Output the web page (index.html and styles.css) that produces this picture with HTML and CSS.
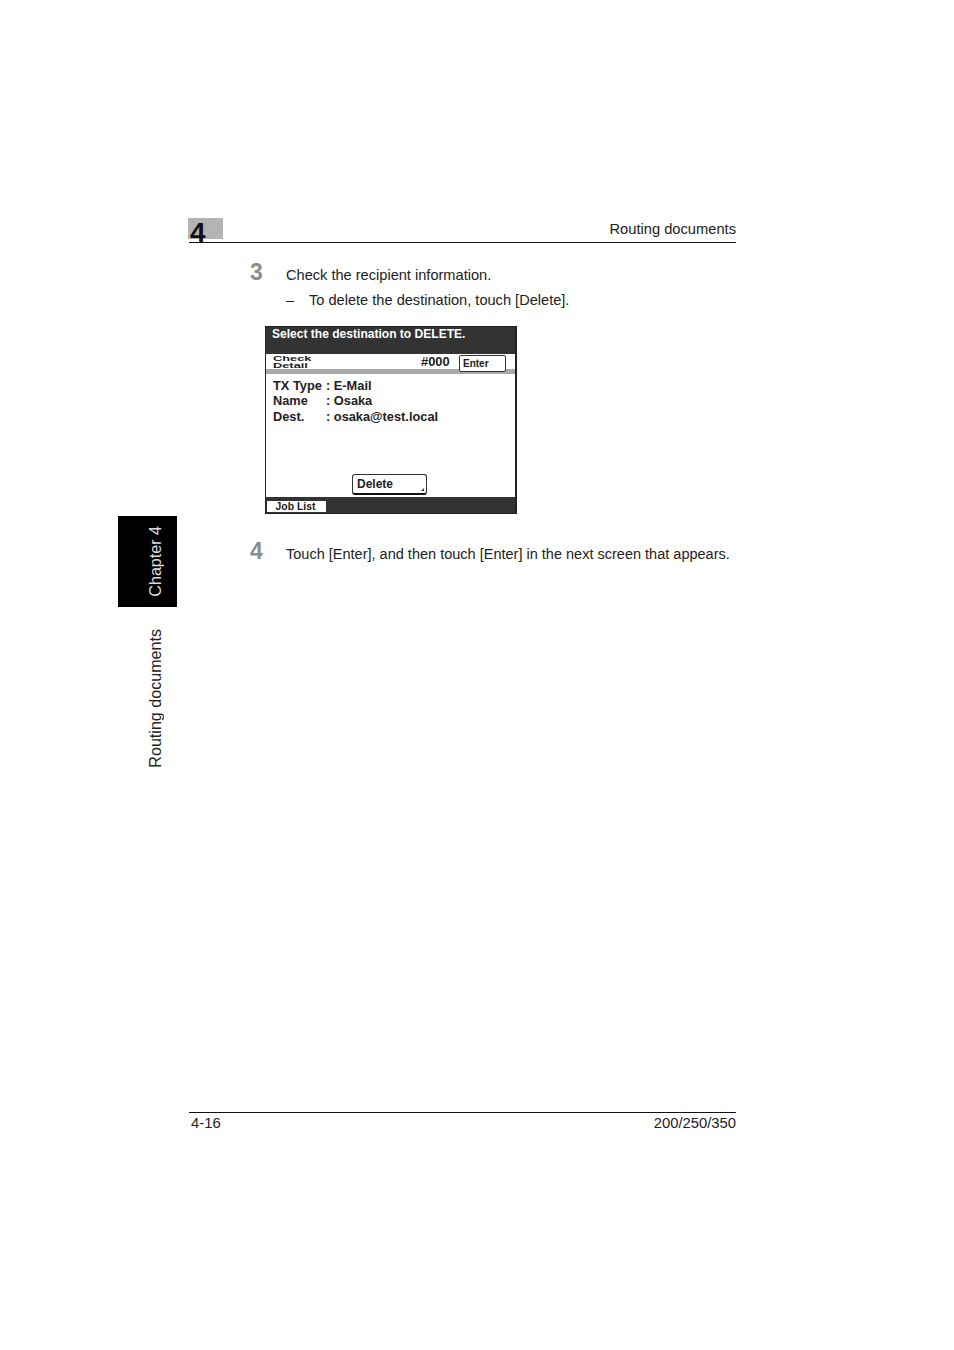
FILE: index.html
```html
<!doctype html>
<html lang="en">
  <head>
    <meta charset="UTF-8" />
    <title>Routing documents</title>
    <link rel="stylesheet" href="styles.css">
  </head>
  <body>
    <div class="page">
      <!-- Side tabs -->
      <div class="side">
        <div class="side-tab"><span class="side-text">Chapter 4</span></div>
        <div class="side-label"><span class="side-text">Routing documents</span></div>
      </div>

      <div class="main">
        <div class="header">
          <div class="chapter-box"><span class="chapter-num">4</span></div>
          <span>Routing documents</span>
        </div>

        <div class="step step-first">
          <div class="step-num">3</div>
          <div class="step-body">
            <p class="step-text">Check the recipient information.</p>
            <p class="step-sub"><span class="dash">–</span>To delete the destination, touch [Delete].</p>
          </div>
        </div>

        <!-- Panel screenshot -->
        <div class="panel">
          <div class="panel-title">Select the destination to DELETE.</div>
          <div class="panel-bar">
            <div class="check-detail"><div class="check-text">Check<br />Detail</div></div>
            <div class="panel-num">#000</div>
            <div class="enter-button">Enter</div>
          </div>
          <div class="panel-rule"></div>
          <div class="panel-body">
            <div class="info-row"><span class="info-key">TX Type</span><span>: E-Mail</span></div>
            <div class="info-row"><span class="info-key">Name</span><span>: Osaka</span></div>
            <div class="info-row"><span class="info-key">Dest.</span><span>: osaka@test.local</span></div>
            <div class="delete-button">Delete<span class="corner"></span></div>
          </div>
          <div class="panel-foot"><div class="job-list">Job List</div></div>
        </div>

        <div class="step step-second">
          <div class="step-num">4</div>
          <div class="step-body">
            <p class="step-text">Touch [Enter], and then touch [Enter] in the next screen that appears.</p>
          </div>
        </div>

        <div class="footer">
          <span class="page-num">4-16</span>
          <span>200/250/350</span>
        </div>
      </div>
    </div>
  </body>
</html>
```

FILE: styles.css
```css
body {
  font-family: "Liberation Sans", Arial, sans-serif;
  color: #222;
  background-color: #fff;
  margin: 0;
}
p {
  margin: 0;
}
.page {
  display: flex;
  height: 1350px;
  padding-left: 118px;
  box-sizing: border-box;
}
/* Side tabs */
.side {
  width: 59px;
  padding-top: 516px;
  margin-right: 12px;
}
.side-tab {
  height: 91px;
  padding-left: 16px;
  box-sizing: border-box;
  background-color: #000;
  color: #ddd;
  display: flex;
  justify-content: center;
  align-items: center;
}
.side-label {
  margin-top: 22px;
  padding-left: 16px;
  display: flex;
  justify-content: center;
}
.side-text {
  writing-mode: vertical-rl;
  transform: rotate(180deg);
  font-size: 16.1px;
  line-height: 17px;
  white-space: nowrap;
}
.main {
  width: 547px;
  padding-top: 218px;
}
/* Header */
.header {
  height: 24px;
  border-bottom: 1px solid #111;
  display: flex;
  justify-content: space-between;
  font-size: 14.7px;
  line-height: 22px;
}
.chapter-box {
  width: 35px;
  height: 21px;
  margin-left: -1px;
  background-color: #b4b4b4;
}
.chapter-num {
  display: block;
  margin-left: 2px;
  font-size: 28px;
  font-weight: bold;
  line-height: 30px;
  color: #111;
}
/* Steps */
.step {
  display: flex;
  font-size: 14.6px;
  line-height: 25px;
}
.step-first {
  margin-top: 20px;
}
.step-second {
  margin-top: 28px;
  font-size: 14.53px;
}
.step-num {
  width: 36px;
  margin-left: 61px;
  margin-top: -3px;
  font-size: 23px;
  font-weight: bold;
  color: #8c8c8c;
}
.step-sub {
  display: flex;
}
.dash {
  width: 23px;
}
/* Panel */
.panel {
  width: 252px;
  height: 188px;
  box-sizing: border-box;
  margin: 13px 0 0 76px;
  border: 2px solid #222;
  border-top-width: 1px;
  border-bottom-width: 1px;
  border-left-width: 1px;
  display: flex;
  flex-direction: column;
  font-weight: bold;
  font-size: 12.8px;
  background-color: #fff;
}
.panel-title {
  height: 27px;
  padding-left: 6px;
  background-color: #333;
  color: #fff;
  font-size: 12.05px;
  line-height: 14px;
}
.panel-bar {
  height: 15px;
  display: flex;
  align-items: center;
}
.check-detail {
  width: 155px;
  padding-left: 7px;
  box-sizing: border-box;
}
.check-text {
  margin-top: 1px;
  font-size: 8px;
  line-height: 7px;
  transform: scaleX(1.6);
  transform-origin: left center;
}
.panel-num {
  width: 38px;
  font-size: 12.9px;
}
.enter-button {
  width: 47px;
  height: 17px;
  box-sizing: border-box;
  padding-left: 3px;
  border: 1px solid #333;
  border-radius: 2px;
  background-color: #fff;
  font-size: 10px;
  line-height: 16px;
  margin-top: 4px;
  position: relative;
}
.panel-rule {
  height: 5px;
  background-color: #aaa;
}
.panel-body {
  flex: 1;
  padding: 4px 0 0 7px;
  position: relative;
}
.info-row {
  display: flex;
  height: 15.4px;
  line-height: 15.4px;
}
.info-key {
  width: 53px;
}
.delete-button {
  position: absolute;
  left: 86px;
  bottom: 2px;
  width: 69px;
  height: 18px;
  padding-left: 4px;
  border: 1px solid #333;
  border-bottom: 2px solid #111;
  border-radius: 3px;
  font-size: 12px;
  line-height: 18px;
}
.corner {
  position: absolute;
  right: 2px;
  bottom: 2px;
  border-left: 3px solid transparent;
  border-bottom: 3px solid #333;
}
.panel-foot {
  height: 16px;
  padding: 4px 0 0 1px;
  box-sizing: border-box;
  background-color: #333;
}
.job-list {
  width: 59px;
  height: 11px;
  padding-right: 2px;
  box-sizing: border-box;
  background-color: #fff;
  color: #222;
  text-align: center;
  font-size: 10.4px;
  line-height: 12px;
}
/* Footer */
.footer {
  margin-top: 545px;
  padding-top: 1px;
  border-top: 1px solid #111;
  display: flex;
  justify-content: space-between;
  font-size: 14.8px;
  line-height: 18px;
}
.page-num {
  padding-left: 2px;
}
```
